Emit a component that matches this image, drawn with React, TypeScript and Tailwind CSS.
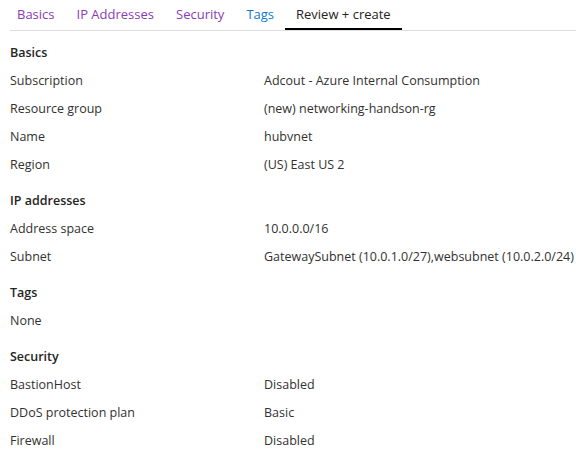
import React from "react";

type Row = { label: string; value?: string };
type Section = { title: string; rows: Row[] };

const tabs = [
  { name: "Basics", color: "text-[#8a3bb5]" },
  { name: "IP Addresses", color: "text-[#8a3bb5]" },
  { name: "Security", color: "text-[#8a3bb5]" },
  { name: "Tags", color: "text-[#0f78d4]" },
  { name: "Review + create", color: "text-[#252423]", active: true },
];

const sections: Section[] = [
  {
    title: "Basics",
    rows: [
      { label: "Subscription", value: "Adcout - Azure Internal Consumption" },
      { label: "Resource group", value: "(new) networking-handson-rg" },
      { label: "Name", value: "hubvnet" },
      { label: "Region", value: "(US) East US 2" },
    ],
  },
  {
    title: "IP addresses",
    rows: [
      { label: "Address space", value: "10.0.0.0/16" },
      { label: "Subnet", value: "GatewaySubnet (10.0.1.0/27),websubnet (10.0.2.0/24)" },
    ],
  },
  { title: "Tags", rows: [{ label: "None" }] },
  {
    title: "Security",
    rows: [
      { label: "BastionHost", value: "Disabled" },
      { label: "DDoS protection plan", value: "Basic" },
      { label: "Firewall", value: "Disabled" },
    ],
  },
];

export default function App() {
  return (
    <div
      className="w-[576px] h-[460px] overflow-hidden bg-white text-[12.5px] text-[#323130]"
      style={{ fontFamily: '"Open Sans", "Noto Sans", sans-serif' }}
    >
      <div className="ml-[10px] flex h-[31px] border-b border-[#e1dfdd] text-[13px]">
        <div className="-ml-[4px] flex">
          {tabs.map((t) => (
            <div
              key={t.name}
              className={`px-[11px] pt-[3px] leading-[22px] ${t.color} ${
                t.active ? "border-b-2 border-black" : ""
              }`}
            >
              {t.name}
            </div>
          ))}
        </div>
      </div>
      <div className="px-[10px] pt-[10px]">
        {sections.map((s) => (
          <div key={s.title} className="mb-[8px]">
            <div className="h-[28px] leading-[24px] font-semibold text-[#252423]">{s.title}</div>
            {s.rows.map((r) => (
              <div key={r.label} className="flex h-[28px] leading-[24px]">
                <div className="w-[254px] shrink-0">{r.label}</div>
                {r.value && <div className="whitespace-nowrap">{r.value}</div>}
              </div>
            ))}
          </div>
        ))}
      </div>
    </div>
  );
}
